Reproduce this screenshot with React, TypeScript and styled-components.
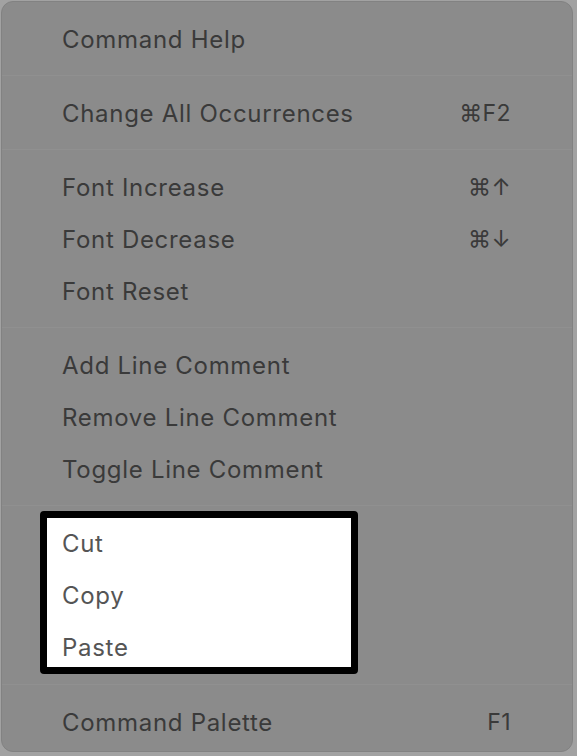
import React from "react";
import styled, { createGlobalStyle } from "styled-components";

const GlobalStyle = createGlobalStyle`
  html, body {
    margin: 0;
    padding: 0;
    background: #a2a2a2;
  }
  body {
    font-family: Inter, "Liberation Sans", sans-serif;
  }
`;

const Page = styled.div`
  width: 577px;
  height: 756px;
  padding: 1px 4px 4px 1px;
  box-sizing: border-box;
`;

const Menu = styled.div`
  height: 100%;
  box-sizing: border-box;
  background: #8b8b8b;
  border: 1px solid #828282;
  border-radius: 12px;
  display: flex;
  flex-direction: column;
  overflow: hidden;
`;

const Section = styled.div<{ $top?: number; $bottom?: number }>`
  display: flex;
  flex-direction: column;
  padding-top: ${(p) => p.$top ?? 11}px;
  padding-bottom: ${(p) => p.$bottom ?? 10}px;
`;

const Separator = styled.div`
  height: 1px;
  background: #7a7a7a;
  border-bottom: 1px solid #909090;
`;

const Row = styled.div`
  height: 52px;
  display: flex;
  align-items: center;
  justify-content: space-between;
  padding: 0 61px 0 60px;
  font-size: 24px;
  letter-spacing: 0.7px;
  color: #3a3a3a;
`;

const Shortcut = styled.span`
  font-size: 23px;
  letter-spacing: 0.4px;
  color: #3a3a3a;
`;

const Highlight = styled.div`
  width: 318px;
  height: 163px;
  box-sizing: border-box;
  margin-left: 38px;
  border: 7px solid #000;
  border-radius: 4px;
  background: #fff;
  display: flex;
  flex-direction: column;
`;

const HighlightRow = styled.div`
  height: 52px;
  flex: none;
  display: flex;
  align-items: center;
  padding-left: 15px;
  font-size: 24px;
  letter-spacing: 0.7px;
  color: #555;

  &:first-child {
    margin-top: -1px;
  }
`;

type Item = { label: string; shortcut?: string };

const groups: Item[][] = [
  [{ label: "Command Help" }],
  [{ label: "Change All Occurrences", shortcut: "⌘F2" }],
  [
    { label: "Font Increase", shortcut: "⌘↑" },
    { label: "Font Decrease", shortcut: "⌘↓" },
    { label: "Font Reset" },
  ],
  [
    { label: "Add Line Comment" },
    { label: "Remove Line Comment" },
    { label: "Toggle Line Comment" },
  ],
];

const clipboard = ["Cut", "Copy", "Paste"];

function MenuRows({ items }: { items: Item[] }) {
  return (
    <>
      {items.map((item) => (
        <Row key={item.label}>
          <span>{item.label}</span>
          {item.shortcut && <Shortcut>{item.shortcut}</Shortcut>}
        </Row>
      ))}
    </>
  );
}

export default function App() {
  return (
    <>
      <GlobalStyle />
      <Page>
        <Menu>
          {groups.map((items, i) => (
            <React.Fragment key={i}>
              <Section>
                <MenuRows items={items} />
              </Section>
              <Separator />
            </React.Fragment>
          ))}
          <Section $top={5} $bottom={10}>
            <Highlight>
              {clipboard.map((label) => (
                <HighlightRow key={label}>{label}</HighlightRow>
              ))}
            </Highlight>
          </Section>
          <Separator />
          <Section>
            <MenuRows items={[{ label: "Command Palette", shortcut: "F1" }]} />
          </Section>
        </Menu>
      </Page>
    </>
  );
}
